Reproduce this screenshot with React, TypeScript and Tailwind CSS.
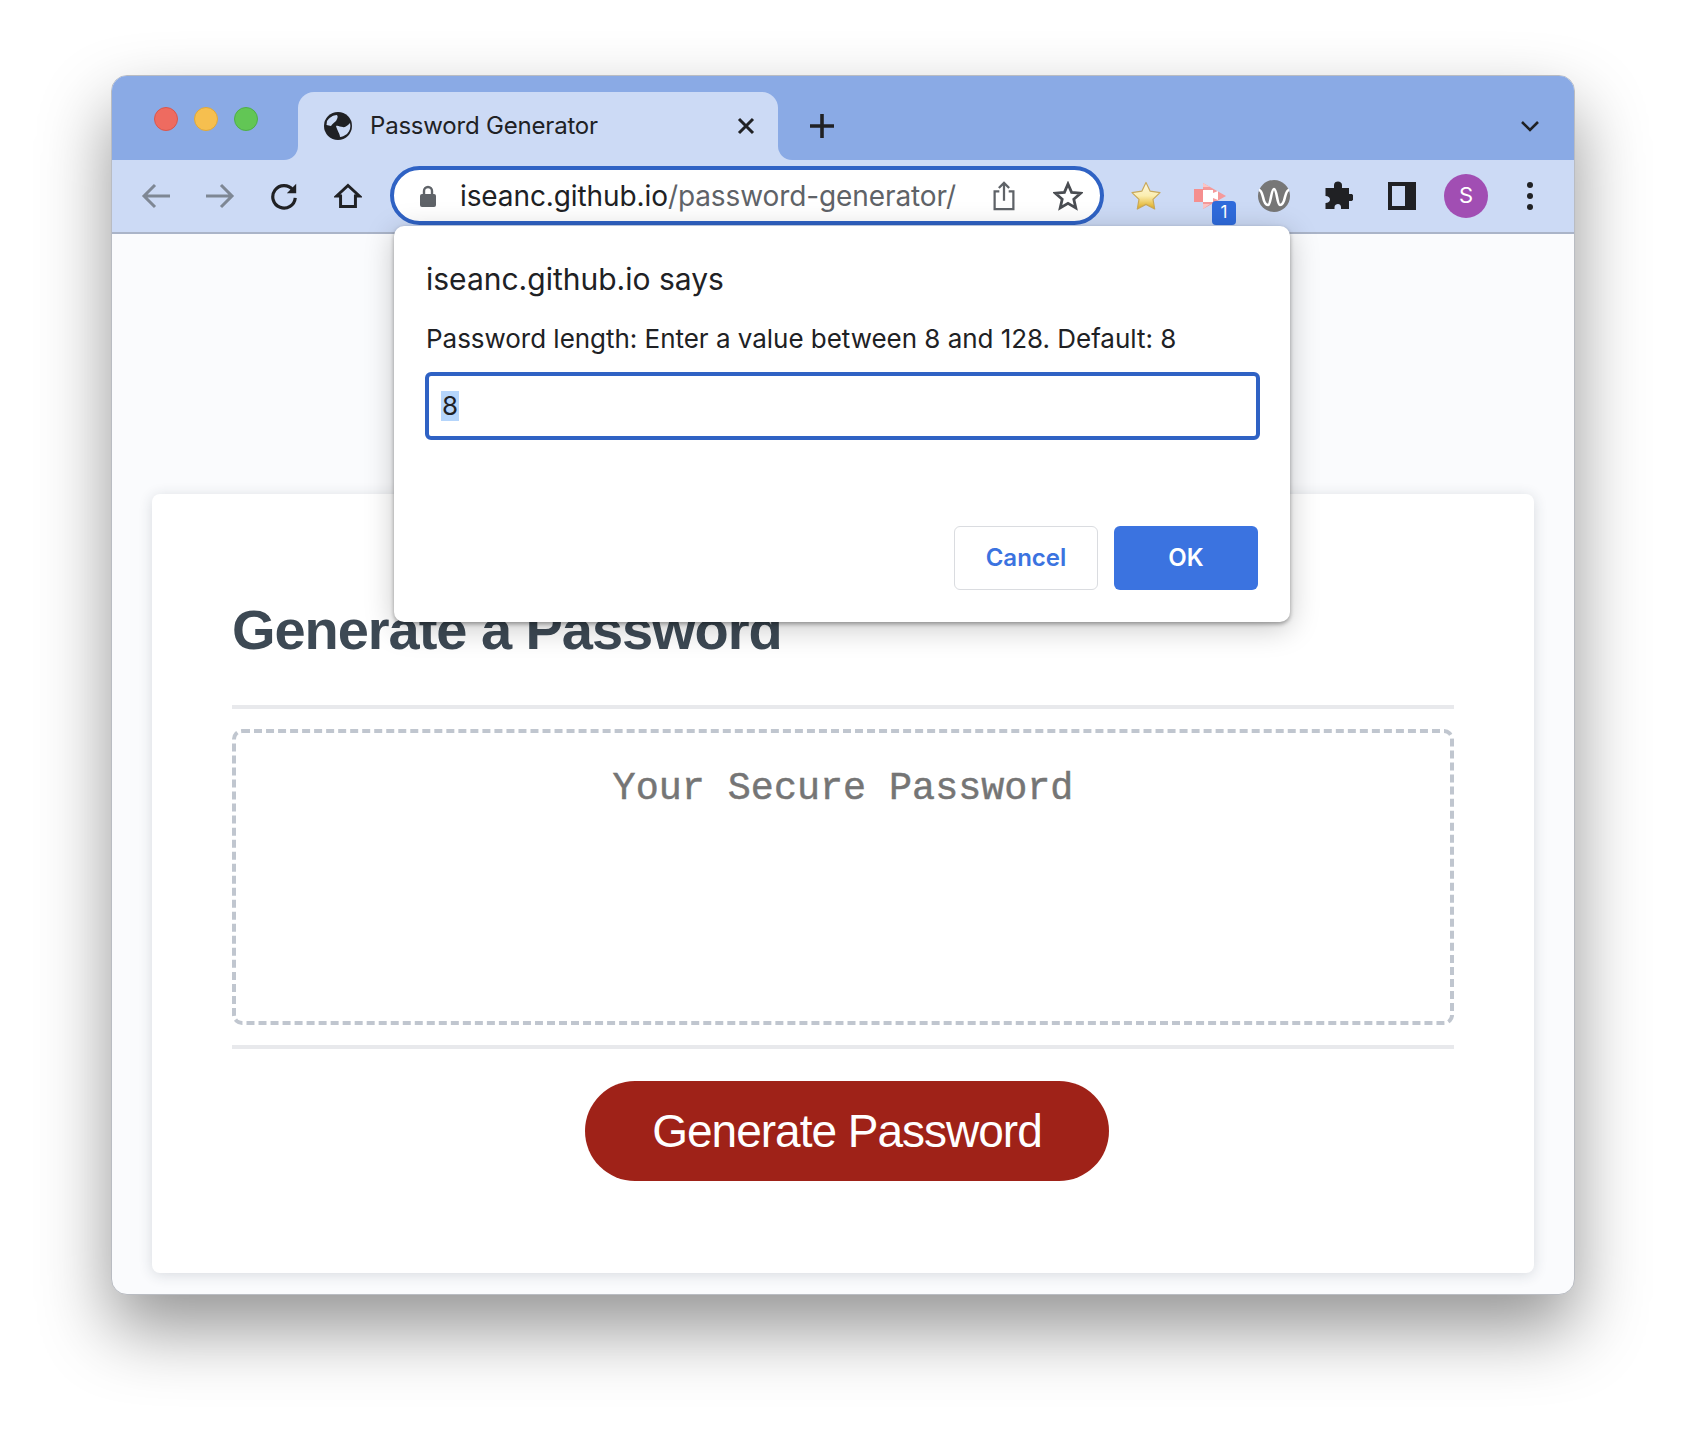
import React from 'react';

const sans = "font-['Inter','Roboto',sans-serif]";

function Globe() {
    return (
        <svg width="28" height="28" viewBox="0 0 28 28">
            <circle cx="14" cy="14" r="14" fill="#202124" />
            <path d="M3 9 C5 6 9 3 13 3 C14.5 5 13 7 12 9 C10 11 8 12 7 14 L2.5 13 Z" fill="#ccdaf5" />
            <path d="M12 14 C14 13 16 15 19 15 C21 16 24 13 26 11 C27 15 26 19 23 22 C20 24 18 25 16 25 C16 22 13 18 12 14 Z" fill="#ccdaf5" />
        </svg>
    );
}

function Nav({ d, color }: { d: string; color: string }) {
    return (
        <svg width="32" height="32" viewBox="0 0 32 32" fill="none" stroke={color} strokeWidth="3">
            <path d={d} />
        </svg>
    );
}

function ExtStar() {
    return (
        <svg width="32" height="32" viewBox="0 0 32 32">
            <defs>
                <linearGradient id="star" x1="0" y1="0" x2="0" y2="1">
                    <stop offset="0" stopColor="#fdf6e0" />
                    <stop offset="0.5" stopColor="#fbeeb0" />
                    <stop offset="1" stopColor="#e0ab1a" />
                </linearGradient>
            </defs>
            <path d="M16 2.5 L20.2 11.2 L30 12.6 L23 19.4 L24.7 29 L16 24.4 L7.3 29 L9 19.4 L2 12.6 L11.8 11.2 Z" fill="url(#star)" stroke="#c9a95a" strokeWidth="1.2" strokeLinejoin="round" />
        </svg>
    );
}

function ExtVideo() {
    return (
        <svg width="32" height="26" viewBox="0 0 32 26">
            <path d="M9 0 L32 13 L9 26 Z" fill="#f59a9a" />
            <rect x="0" y="6" width="10" height="13" fill="#f58f8f" />
            <path d="M9 7 H19 V10 L24 8 V17 L19 15 V19 H9 Z" fill="#ffffff" />
            <path d="M9 0 L16 4 H9 Z M9 26 V21 H16 Z" fill="#fbc4c4" />
        </svg>
    );
}

function ExtWave() {
    return (
        <svg width="32" height="32" viewBox="0 0 32 32">
            <circle cx="16" cy="16" r="16" fill="#777777" />
            <path d="M1 10 C3 10 4 13 5 17 C6 22 8 25 10 25 C13 25 13 9 16 9 C19 9 19 25 22 25 C24 25 26 22 27 17 C28 13 29 10 31 10" fill="none" stroke="#ffffff" strokeWidth="2.6" />
        </svg>
    );
}

function App() {
    return (
        <div className={`min-h-[1442px] w-[1686px] bg-white pl-[111px] pt-[75px] ${sans}`}>
            <div className="relative flex h-[1220px] w-[1464px] flex-col overflow-hidden rounded-[16px] border border-[#b9bcc2] bg-[#fafbfd] shadow-[0_34px_70px_rgba(0,0,0,0.42)] [overflow:clip]">
                {/* tab strip */}
                <div className="flex h-[84px] shrink-0 bg-[#ccdaf5]">
                    <div className="flex w-[186px] items-start gap-[16px] rounded-br-[14px] bg-[#8aaae5] pl-[42px] pt-[31px]">
                        <div className="h-[24px] w-[24px] rounded-full border border-[#d9574c] bg-[#ee6b60]" />
                        <div className="h-[24px] w-[24px] rounded-full border border-[#dfa83a] bg-[#f6bf4f]" />
                        <div className="h-[24px] w-[24px] rounded-full border border-[#4fae48] bg-[#62c655]" />
                    </div>
                    <div className="w-[480px] bg-[#8aaae5]">
                        <div className="mt-[16px] flex h-[68px] items-center rounded-t-[16px] bg-[#ccdaf5] pl-[26px]">
                            <Globe />
                            <span className="ml-[18px] text-[24px] tracking-[-0.2px] text-[#202124]">Password Generator</span>
                            <svg className="ml-auto mr-[23px]" width="18" height="18" viewBox="0 0 18 18" fill="none" stroke="#202124" strokeWidth="3">
                                <path d="M2 2 L16 16 M16 2 L2 16" />
                            </svg>
                        </div>
                    </div>
                    <div className="relative flex flex-1 items-center justify-between rounded-bl-[14px] bg-[#8aaae5] pl-[31px] pr-[34px] pt-[16px]">
                        <svg width="26" height="26" viewBox="0 0 26 26" stroke="#202124" strokeWidth="3.6">
                            <path d="M13 1 V25 M1 13 H25" />
                        </svg>
                        <svg width="20" height="12" viewBox="0 0 20 12" fill="none" stroke="#202124" strokeWidth="2.6">
                            <path d="M2 2 L10 10 L18 2" />
                        </svg>
                    </div>
                </div>

                {/* toolbar */}
                <div className="flex h-[74px] shrink-0 items-center border-b-2 border-[#aab4c8] bg-[#ccdaf5] pb-[1px] pl-[12px]">
                    <div className="flex w-[64px] justify-center"><Nav color="#7e8794" d="M30 16 H4 M15 5 L4 16 L15 27" /></div>
                    <div className="flex w-[64px] justify-center"><Nav color="#7e8794" d="M2 16 H28 M17 5 L28 16 L17 27" /></div>
                    <div className="flex w-[64px] justify-center">
                        <svg width="30" height="30" viewBox="0 0 32 32" fill="none">
                            <path d="M25.5 9.5 A12 12 0 1 0 28 18" stroke="#202124" strokeWidth="3.4" />
                            <path d="M29 3 V13 H19 Z" fill="#202124" />
                        </svg>
                    </div>
                    <div className="flex w-[64px] justify-center">
                        <svg width="28" height="28" viewBox="0 0 32 32" fill="none" stroke="#202124" strokeWidth="3.4" strokeLinejoin="miter">
                            <path d="M16 4 L29 16 H24.5 V28 H7.5 V16 H3 Z" />
                        </svg>
                    </div>
                    <div className="ml-[10px] flex h-[59px] w-[714px] items-center rounded-full border-[4px] border-[#2f62c4] bg-white pl-[25px]">
                        <svg width="18" height="24" viewBox="0 0 18 24" fill="none">
                            <path d="M5 11 V7 A4 4 0 0 1 13 7 V11" stroke="#5f6368" strokeWidth="2.4" />
                            <rect x="1" y="10" width="16" height="13" rx="2" fill="#5f6368" />
                        </svg>
                        <span className="ml-[23px] w-[497px] whitespace-nowrap text-[28px] tracking-[-0.1px] text-[#202124]">
                            iseanc.github.io<span className="text-[#5f6368]">/password-generator/</span>
                        </span>
                        <svg className="ml-[35px]" width="24" height="30" viewBox="0 0 24 32" fill="none" stroke="#5f6368" strokeWidth="2.4">
                            <path d="M7 11 H2 V30 H22 V11 H17 M12 21 V2 M6.5 7.5 L12 2 L17.5 7.5" />
                        </svg>
                        <svg className="ml-[37px]" width="30" height="30" viewBox="0 0 30 30" fill="none" stroke="#4a4d52" strokeWidth="2.8" strokeLinejoin="miter">
                            <path d="M15 3 L18.6 11.4 L27.6 12.2 L20.8 18.2 L22.8 27 L15 22.4 L7.2 27 L9.2 18.2 L2.4 12.2 L11.4 11.4 Z" />
                        </svg>
                    </div>
                    <div className="ml-[10px] flex w-[64px] justify-center"><ExtStar /></div>
                    <div className="relative flex w-[64px] justify-center">
                        <ExtVideo />
                        <span className="absolute left-[34px] top-[18px] flex h-[24px] w-[24px] items-center justify-center rounded-[4px] bg-[#2f6bdc] text-[17px] text-white">1</span>
                    </div>
                    <div className="flex w-[64px] justify-center"><ExtWave /></div>
                    <div className="flex w-[64px] justify-center">
                        <svg width="30" height="30" viewBox="0 0 30 30" fill="#202124">
                            <path d="M11 4 C11 1.5 13 0.5 15 0.5 C17 0.5 19 1.8 19 4 V7 H26 V13 H28 C30 13 30.5 15 30.5 16.5 C30.5 18.5 29.5 20 28 20 H26 V28 H18 V26 C18 24 16.5 23 15 23 C13.5 23 11.5 24 11.5 26 V28 H2.5 V22 C5 22 7 20.5 7 18.5 C7 16.5 5 15 2.5 15 V7 H11 Z" />
                        </svg>
                    </div>
                    <div className="flex w-[64px] justify-center">
                        <div className="h-[28px] w-[28px] border-[4px] border-r-[11px] border-[#202124] bg-[#ccdaf5]" />
                    </div>
                    <div className="flex w-[64px] justify-center">
                        <div className="flex h-[44px] w-[44px] items-center justify-center rounded-full bg-[#a14eb3] text-[22px] text-white">S</div>
                    </div>
                    <div className="flex w-[64px] flex-col items-center gap-[5px]">
                        <div className="h-[6px] w-[6px] rounded-full bg-[#202124]" />
                        <div className="h-[6px] w-[6px] rounded-full bg-[#202124]" />
                        <div className="h-[6px] w-[6px] rounded-full bg-[#202124]" />
                    </div>
                </div>

                {/* page */}
                <div className="flex flex-1 flex-col px-[40px] pt-[260px]">
                    <div className="flex h-[779px] flex-col rounded-[8px] bg-white px-[80px] shadow-[0_2px_14px_rgba(40,50,70,0.16)]">
                        <h2 className="mt-[104px] font-['Liberation_Sans',sans-serif] text-[56px] font-bold leading-[64px] tracking-[-1.05px] text-[#3d4954]">Generate a Password</h2>
                        <div className="mt-[43px] h-[4px] bg-[#e8e9ec]" />
                        <div className="mt-[20px] flex h-[296px] justify-center rounded-[10px] border-[4px] border-dashed border-[#c0c6cf] pt-[34px]">
                            <span className="font-['Liberation_Mono',monospace] text-[38.4px] leading-[44px] text-[#757575] [-webkit-text-stroke:0.5px_#757575]">Your Secure Password</span>
                        </div>
                        <div className="mt-[20px] h-[4px] bg-[#e8e9ec]" />
                        <button className="ml-[353px] mt-[32px] flex h-[100px] w-[524px] items-center justify-center rounded-full bg-[#9f2218] font-['Liberation_Sans',sans-serif] text-[46px] tracking-[-1px] text-white">
                            Generate Password
                        </button>
                    </div>
                </div>

                {/* prompt dialog */}
                <div className="absolute left-[282px] top-[150px] flex h-[396px] w-[896px] flex-col rounded-[10px] bg-white px-[32px] shadow-[0_2px_4px_rgba(0,0,0,0.35),0_6px_30px_rgba(0,0,0,0.22)]">
                    <div className="mt-[33px] text-[30px] leading-[40px] text-[#202124]">iseanc.github.io says</div>
                    <div className="mt-[22px] text-[26px] leading-[36px] tracking-[-0.03px] text-[#202124]">Password length: Enter a value between 8 and 128. Default: 8</div>
                    <div className="-ml-[1px] mt-[15px] flex h-[68px] w-[835px] items-center rounded-[6px] border-[4px] border-[#2f62c4] pl-[12px]">
                        <span className="bg-[#b5d5fb] px-[1px] text-[26px] leading-[30px] text-[#202124]">8</span>
                    </div>
                    <div className="mt-[86px] flex w-[832px] justify-end gap-[16px]">
                        <button className="h-[64px] w-[144px] rounded-[6px] border border-[#dadce0] bg-white text-[24px] font-semibold text-[#3b73e0]">Cancel</button>
                        <button className="h-[64px] w-[144px] rounded-[6px] bg-[#3b73e0] text-[24px] font-semibold text-white">OK</button>
                    </div>
                </div>
            </div>
        </div>
    );
}

export default App;
